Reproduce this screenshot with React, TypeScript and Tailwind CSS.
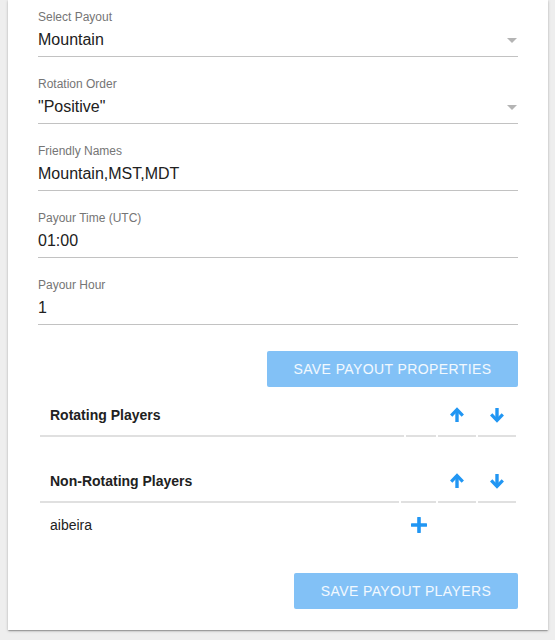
// ---------------------------------------------------------------------------
// Icons
// ---------------------------------------------------------------------------

function ArrowIcon({ down }: { down?: boolean }) {
  return (
    <svg width="16" height="16" viewBox="0 0 16 16" className={down ? 'rotate-180' : ''}>
      <path d="M8 15V3.5" stroke="#2196f3" strokeWidth="3.4" fill="none" />
      <path d="M2.2 8.6L8 2.6l5.8 6" stroke="#2196f3" strokeWidth="3.2" fill="none" strokeLinejoin="miter" />
    </svg>
  );
}

function PlusIcon() {
  return (
    <svg width="16" height="16" viewBox="0 0 16 16">
      <path d="M8 1v14M1 8h14" stroke="#2196f3" strokeWidth="3.6" strokeLinecap="round" fill="none" />
    </svg>
  );
}

// ---------------------------------------------------------------------------
// Form field
// ---------------------------------------------------------------------------

function Field({ label, value, select, first }: { label: string; value: string; select?: boolean; first?: boolean }) {
  return (
    <div className={`${first ? 'pt-[9px]' : 'pt-[19px]'}`}>
      <div className="text-[12px] leading-[16px] text-[#757575]">{label}</div>
      <div className="mt-[3px] flex items-center justify-between border-b border-[#c2c2c2] pb-[4px]">
        <span className="text-[16px] leading-[24px] text-[#212121]">{value}</span>
        {select && (
          <span className="mr-[1px] h-0 w-0 border-x-[5px] border-t-[5px] border-x-transparent border-t-[#b4b4b4]" />
        )}
      </div>
    </div>
  );
}

const cell = 'h-[42px] border-b-2 border-[#e0e0e0] flex items-center';

export default function App() {
  return (
    <div className="min-h-[640px] bg-[#eeeeee] pl-[8px] font-['Liberation_Sans',Arial,sans-serif]">
      <div className="w-[540px] bg-white px-[30px] pb-[21px] shadow-[0_1px_3px_rgba(0,0,0,0.2),0_1px_1px_rgba(0,0,0,0.14),0_2px_1px_-1px_rgba(0,0,0,0.12)]">
        <Field first label="Select Payout" value="Mountain" select />
        <Field label="Rotation Order" value={'"Positive"'} select />
        <Field label="Friendly Names" value="Mountain,MST,MDT" />
        <Field label="Payour Time (UTC)" value="01:00" />
        <Field label="Payour Hour" value="1" />

        <div className="mt-[26px] flex justify-end">
          <button className="h-[36px] w-[251px] rounded-[2px] bg-[#82c1f6] text-[14px] tracking-[0.4px] text-white/90">
            SAVE PAYOUT PROPERTIES
          </button>
        </div>

        {/* Rotating players */}
        <div className="mt-[6px] flex gap-[2px] p-[2px]">
          <div className={`${cell} w-[364px] pl-[10px] text-[14px] font-bold text-[#212121]`}>Rotating Players</div>
          <div className={`${cell} w-[30px]`} />
          <div className={`${cell} w-[38px] justify-center`}>
            <ArrowIcon />
          </div>
          <div className={`${cell} w-[38px] justify-center`}>
            <ArrowIcon down />
          </div>
        </div>

        {/* Non-rotating players */}
        <div className="mt-[20px] flex flex-col gap-[2px] p-[2px]">
          <div className="flex gap-[2px]">
            <div className={`${cell} w-[359px] pl-[10px] text-[14px] font-bold text-[#212121]`}>Non-Rotating Players</div>
            <div className={`${cell} w-[35px]`} />
            <div className={`${cell} w-[38px] justify-center`}>
              <ArrowIcon />
            </div>
            <div className={`${cell} w-[38px] justify-center`}>
              <ArrowIcon down />
            </div>
          </div>
          <div className="flex h-[40px] gap-[2px]">
            <div className="flex w-[359px] items-center pl-[10px] text-[14px] text-[#212121]">aibeira</div>
            <div className="flex w-[35px] items-center justify-center">
              <PlusIcon />
            </div>
            <div className="w-[38px]" />
            <div className="w-[38px]" />
          </div>
        </div>

        <div className="mt-[26px] flex justify-end">
          <button className="h-[36px] w-[224px] rounded-[2px] bg-[#82c1f6] text-[14px] tracking-[0.4px] text-white/90">
            SAVE PAYOUT PLAYERS
          </button>
        </div>
      </div>
    </div>
  );
}
